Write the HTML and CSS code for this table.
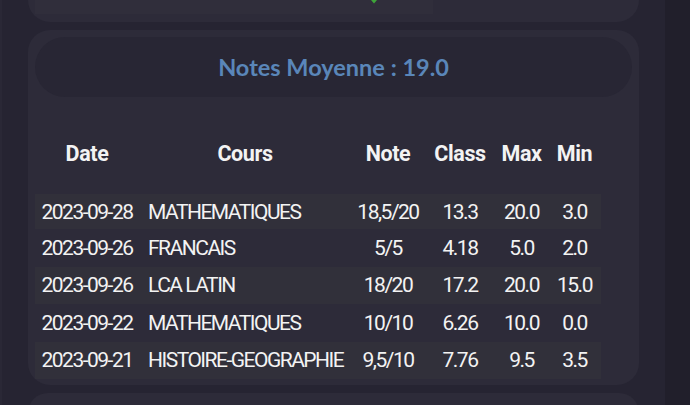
FILE: index.html
```html
<!DOCTYPE html>
<html lang="fr">
<head>
<meta charset="utf-8">
<title>Notes</title>
<link rel="stylesheet" href="styles.css">
</head>
<body>
<div class="screen">
  <div class="edge"></div>
  <main class="main">
    <section class="card card-top">
      <div class="chart">
        <svg class="marker" width="6" height="4" viewBox="0 0 6 4"><path d="M0 0 L6 0 L3 3.5 Z" fill="#3ea43a"/></svg>
      </div>
    </section>
    <section class="card card-notes">
      <div class="pill"><h2 class="title">Notes Moyenne : 19.0</h2></div>
      <table class="grades">
        <colgroup>
          <col class="c-date"><col class="c-cours"><col class="c-note"><col class="c-class"><col class="c-max"><col class="c-min">
        </colgroup>
        <thead>
          <tr><th>Date</th><th>Cours</th><th>Note</th><th>Class</th><th>Max</th><th>Min</th></tr>
        </thead>
        <tbody>
          <tr class="odd"><td>2023-09-28</td><td class="name">MATHEMATIQUES</td><td>18,5/20</td><td>13.3</td><td>20.0</td><td>3.0</td></tr>
          <tr><td>2023-09-26</td><td class="name">FRANCAIS</td><td>5/5</td><td>4.18</td><td>5.0</td><td>2.0</td></tr>
          <tr class="odd"><td>2023-09-26</td><td class="name">LCA LATIN</td><td>18/20</td><td>17.2</td><td>20.0</td><td>15.0</td></tr>
          <tr><td>2023-09-22</td><td class="name">MATHEMATIQUES</td><td>10/10</td><td>6.26</td><td>10.0</td><td>0.0</td></tr>
          <tr class="odd"><td>2023-09-21</td><td class="name">HISTOIRE-GEOGRAPHIE</td><td>9,5/10</td><td>7.76</td><td>9.5</td><td>3.5</td></tr>
        </tbody>
      </table>
    </section>
    <section class="card card-next"></section>
  </main>
  <div class="rail"></div>
</div>
</body>
</html>
```
FILE: styles.css
```css
html, body {
  margin: 0;
  padding: 0;
  height: 100%;
  overflow: hidden;
  background: #252331;
}
.screen {
  display: flex;
  height: 405px;
  overflow: hidden;
}
.edge {
  width: 2px;
  background: #2a2836;
  flex: none;
}
.rail {
  width: 25px;
  background: #211f2b;
  flex: none;
}
.main {
  flex: 1;
  padding: 0 26px;
  display: flex;
  flex-direction: column;
  gap: 8px;
  background: #262432;
}
.card {
  background: #2d2b39;
  border-radius: 22px;
  flex: none;
}
.card-top {
  margin-top: -40px;
  height: 62px;
  padding: 0 7px 8px;
  box-sizing: border-box;
  display: flex;
  align-items: flex-end;
}
.chart {
  position: relative;
  width: 398px;
  height: 40px;
  background: #302e3b;
}
.marker {
  position: absolute;
  left: 336px;
  top: 26px;
}
.card-notes {
  padding: 7px 7px 6px;
}
.pill {
  height: 60px;
  background: #282634;
  border-radius: 30px;
  display: flex;
  align-items: center;
  justify-content: center;
}
.title {
  margin: 0;
  font-family: Lato, "Open Sans", sans-serif;
  font-weight: 700;
  font-size: 23.5px;
  color: #5a86b9;
  letter-spacing: 0;
}
.grades {
  margin-top: 23px;
  border-collapse: collapse;
  table-layout: fixed;
  width: 566px;
  font-family: Roboto, "Liberation Sans", sans-serif;
  color: #f3f3f3;
}
.c-date { width: 104px; }
.c-cours { width: 212px; }
.c-note { width: 74px; }
.c-class { width: 70px; }
.c-max { width: 53px; }
.c-min { width: 53px; }
.grades thead tr {
  height: 72px;
}
.grades th {
  font-weight: 700;
  font-size: 21.5px;
  text-align: center;
  padding: 0 0 4px;
  border-bottom: 4px solid #2d2b39;
  letter-spacing: -0.4px;
}
.grades tbody tr {
  height: 37.4px;
}
.grades td {
  font-size: 21px;
  letter-spacing: -1.5px;
  text-align: center;
  padding: 0;
  white-space: nowrap;
}
.grades td.name {
  text-align: left;
  padding-left: 9px;
}
.grades tr.odd {
  background: #31303a;
}
.card-next {
  height: 40px;
}
```
